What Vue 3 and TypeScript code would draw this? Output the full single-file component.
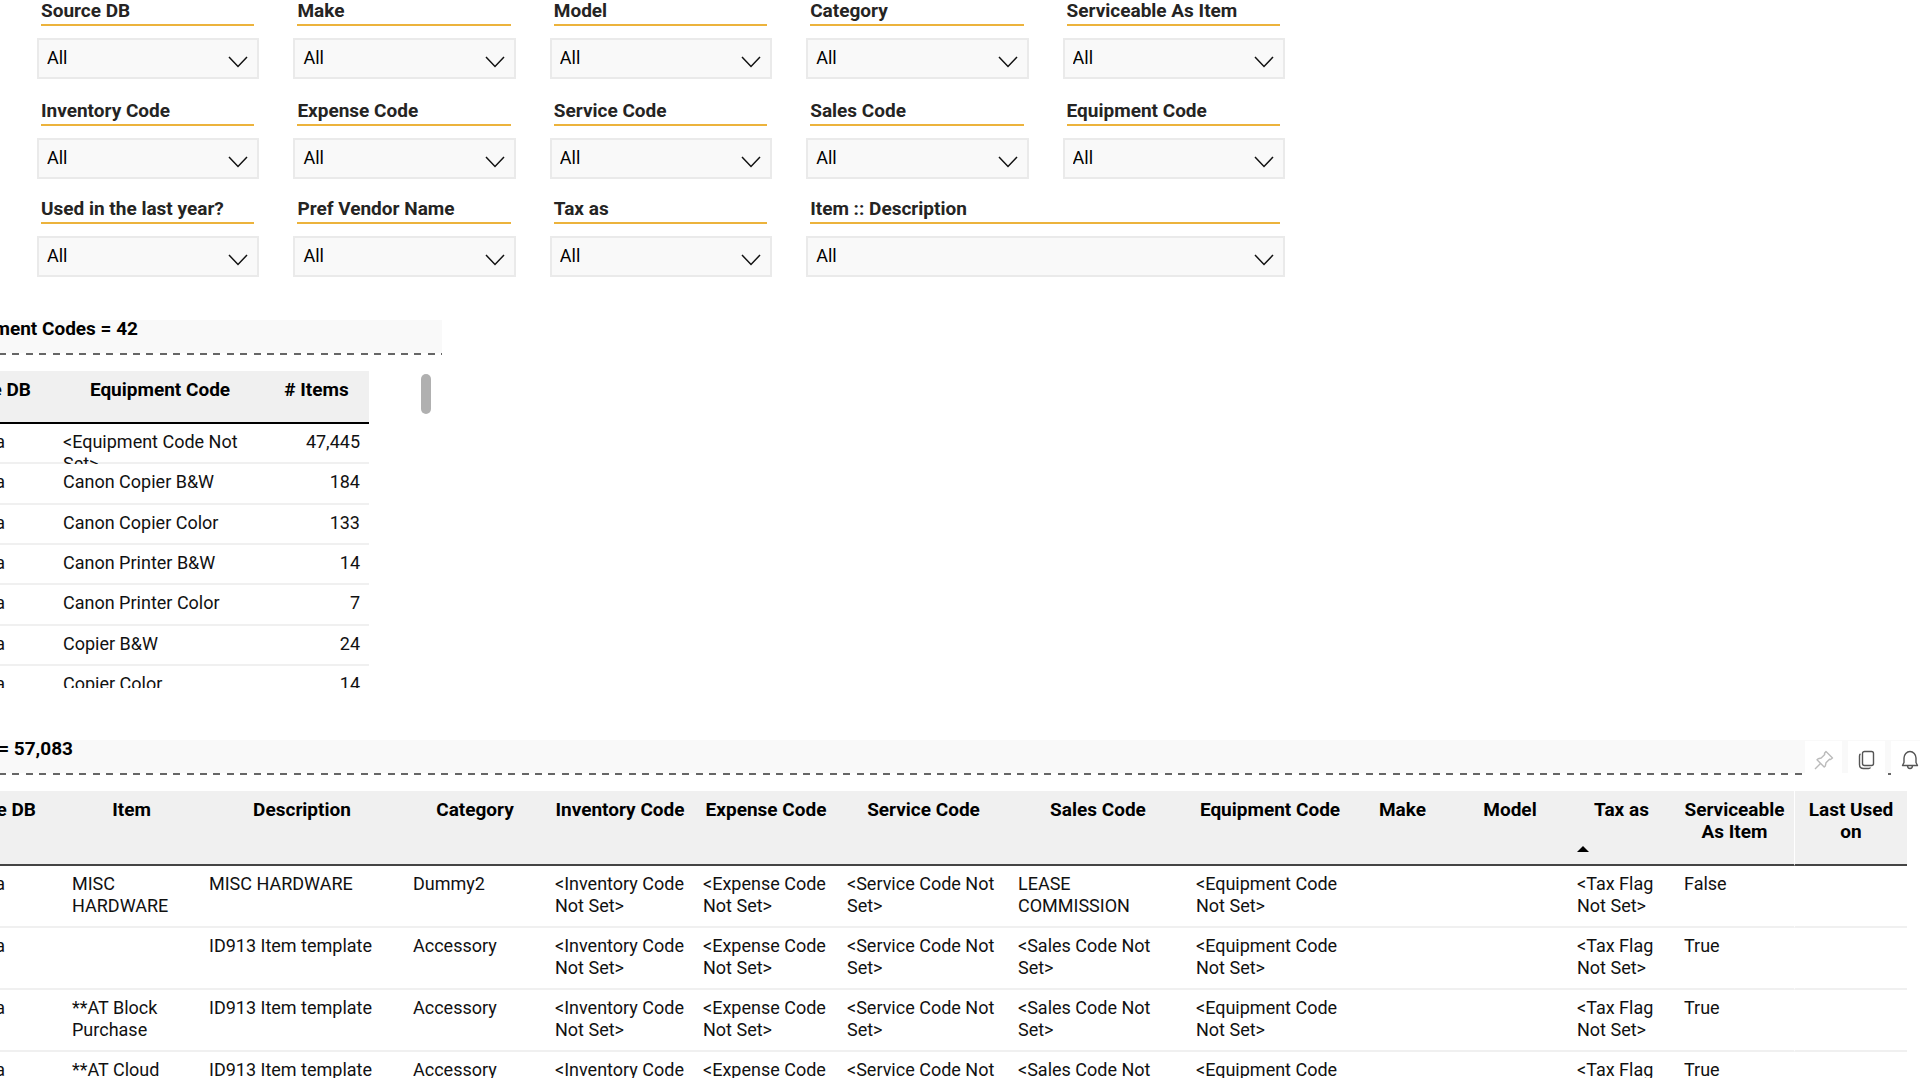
<script setup lang="ts">
interface Filter {
  id: string
  label: string
  wide?: boolean
}

interface Column {
  label: string
  width: number
  sorted?: boolean
}

const filters: Filter[] = [
  { id: 'source-db', label: 'Source DB' },
  { id: 'make', label: 'Make' },
  { id: 'model', label: 'Model' },
  { id: 'category', label: 'Category' },
  { id: 'serviceable', label: 'Serviceable As Item' },
  { id: 'inventory', label: 'Inventory Code' },
  { id: 'expense', label: 'Expense Code' },
  { id: 'service', label: 'Service Code' },
  { id: 'sales', label: 'Sales Code' },
  { id: 'equipment', label: 'Equipment Code' },
  { id: 'used', label: 'Used in the last year?' },
  { id: 'vendor', label: 'Pref Vendor Name' },
  { id: 'tax', label: 'Tax as' },
  { id: 'item', label: 'Item :: Description', wide: true },
]

const codes: [string, string][] = [
  ['<Equipment Code Not Set>', '47,445'],
  ['Canon Copier B&W', '184'],
  ['Canon Copier Color', '133'],
  ['Canon Printer B&W', '14'],
  ['Canon Printer Color', '7'],
  ['Copier B&W', '24'],
  ['Copier Color', '14'],
]

const dbColumnWidth = 63

const columns: Column[] = [
  { label: 'Item', width: 137 },
  { label: 'Description', width: 204 },
  { label: 'Category', width: 142 },
  { label: 'Inventory Code', width: 148 },
  { label: 'Expense Code', width: 144 },
  { label: 'Service Code', width: 171 },
  { label: 'Sales Code', width: 178 },
  { label: 'Equipment Code', width: 166 },
  { label: 'Make', width: 99 },
  { label: 'Model', width: 116 },
  { label: 'Tax as', width: 107, sorted: true },
  { label: 'Serviceable As Item', width: 119 },
  { label: 'Last Used on', width: 113 },
]

function itemRow(item: string, description: string, category: string, sales: string, serviceable: string): string[] {
  return [
    item,
    description,
    category,
    '<Inventory Code Not Set>',
    '<Expense Code Not Set>',
    '<Service Code Not Set>',
    sales,
    '<Equipment Code Not Set>',
    '',
    '',
    '<Tax Flag Not Set>',
    serviceable,
    '',
  ]
}

const items: string[][] = [
  itemRow('MISC HARDWARE', 'MISC HARDWARE', 'Dummy2', 'LEASE COMMISSION', 'False'),
  itemRow('', 'ID913 Item template', 'Accessory', '<Sales Code Not Set>', 'True'),
  itemRow('**AT Block Purchase', 'ID913 Item template', 'Accessory', '<Sales Code Not Set>', 'True'),
  itemRow('**AT Cloud', 'ID913 Item template', 'Accessory', '<Sales Code Not Set>', 'True'),
]
</script>

<template>
  <main class="report">
    <form class="filters">
      <div v-for="f in filters" :key="f.id" class="filter" :class="{ wide: f.wide }">
        <label :for="f.id">{{ f.label }}</label>
        <div class="picker">
          <select :id="f.id">
            <option>All</option>
          </select>
          <svg class="chevron" viewBox="0 0 20 12" aria-hidden="true">
            <path d="M1 1l9 9.500 9-9.500" />
          </svg>
        </div>
      </div>
    </form>

    <section class="codes">
      <h2 class="title"><span class="title-codes">ment Codes = 42</span></h2>
      <div class="codes-body">
        <table class="grid codes-grid">
          <colgroup>
            <col class="c-db" />
            <col class="c-code" />
            <col class="c-count" />
          </colgroup>
          <thead>
            <tr>
              <th class="db"><span>e DB</span></th>
              <th>Equipment Code</th>
              <th># Items</th>
            </tr>
          </thead>
          <tbody>
            <tr v-for="[code, count] in codes" :key="code">
              <td class="db"><span>a</span></td>
              <td><div class="clip">{{ code }}</div></td>
              <td class="num">{{ count }}</td>
            </tr>
          </tbody>
        </table>
        <div class="thumb"></div>
      </div>
    </section>

    <section class="items">
      <div class="items-head">
        <h2 class="title"><span class="title-items">= 57,083</span></h2>
        <div class="tools">
          <button type="button" class="pin" aria-label="Pin visual">
            <svg viewBox="0 0 20 20"><path d="M12 1.500L18.500 8L16.500 9.500L15.500 9.300L12 12.800L11.300 16L10.200 17L3 9.800L4.200 8.700L7.200 8L10.700 4.500L10.500 3.200ZM6.500 13.500L1 19" /></svg>
          </button>
          <button type="button" aria-label="Copy visual">
            <svg viewBox="0 0 20 20"><rect x="5.500" y="1.500" width="11" height="14" rx="2" /><path d="M3.500 4Q2.500 4.500 2.500 6V14.500Q2.500 18.500 6.500 18.500H11.500Q13 18.500 13.500 17.500" /></svg>
          </button>
          <button type="button" aria-label="Set alert">
            <svg viewBox="0 0 20 20"><path d="M2.500 15.500L4 12.500V8A6 6.500 0 0 1 16 8V12.500L17.500 15.500ZM7.500 15.500A2.500 3 0 0 0 12.500 15.500" /></svg>
          </button>
        </div>
      </div>
      <table class="grid items-grid">
        <colgroup>
          <col :style="{ width: dbColumnWidth + 'px' }" />
          <col v-for="c in columns" :key="c.label" :style="{ width: c.width + 'px' }" />
        </colgroup>
        <thead>
          <tr>
            <th class="db"><span>e DB</span></th>
            <th v-for="c in columns" :key="c.label">
              {{ c.label }}
              <svg v-if="c.sorted" class="sort" viewBox="0 0 12 6" aria-hidden="true"><path d="M0 6L6 0L12 6Z" /></svg>
            </th>
          </tr>
        </thead>
        <tbody>
          <tr v-for="(row, r) in items" :key="r">
            <td class="db"><span>a</span></td>
            <td v-for="(cell, c) in row" :key="c">{{ cell }}</td>
          </tr>
        </tbody>
      </table>
    </section>
  </main>
</template>

<style>
body {
  margin: 0;
  background: #fff;
}
</style>

<style scoped>
.report {
  height: 100vh;
  overflow: hidden;
  font-family: Roboto, "Liberation Sans", sans-serif;
  font-size: 18px;
  line-height: 22px;
  color: #111;
}

.filters {
  display: grid;
  grid-template-columns: repeat(5, 1fr);
  grid-template-rows: 100px 98px 122px;
  column-gap: 34px;
  width: 65%;
  margin-left: 37px;
}

.wide {
  grid-column: span 2;
}

.filter label {
  display: block;
  height: 24px;
  margin: 0 5px 12px 4px;
  border-bottom: 2px solid #ecb33c;
  font-size: 19px;
  font-weight: 700;
  color: #252423;
  white-space: nowrap;
}

.picker {
  position: relative;
}

select {
  appearance: none;
  display: block;
  width: 100%;
  height: 41px;
  padding: 0 8px 2px;
  border: 2px solid #eaeaea;
  border-radius: 0;
  background: #f9f9f9;
  font: inherit;
  color: #000;
}

.chevron {
  position: absolute;
  right: 11px;
  top: 18px;
  width: 20px;
  height: 12px;
  pointer-events: none;
  fill: none;
  stroke: #111;
  stroke-width: 1.500;
}

.title {
  height: 35px;
  margin: 0;
  font-size: 19px;
  font-weight: 700;
  line-height: 18px;
  background:
    repeating-linear-gradient(90deg, #666 0 6px, transparent 6px 12px, #666 12px 19px, transparent 19px 26px, #666 26px 33px, transparent 33px 39px, #666 39px 46px, transparent 46px 53px, #666 53px 60px, transparent 60px 66px, #666 66px 67px) 0 100% / 100% 2px no-repeat,
    linear-gradient(#f9f9f9, #f9f9f9) 0 0 / 100% 33px no-repeat;
  color: #000;
}

.title span {
  display: flex;
  justify-content: flex-end;
  white-space: nowrap;
}

.title-codes {
  width: 138px;
}

.title-items {
  width: 73px;
}

.grid {
  table-layout: fixed;
  border-collapse: separate;
  border-spacing: 0;
}

th,
td {
  box-sizing: border-box;
  padding: 7px 9px 0;
  vertical-align: top;
  text-align: left;
}

th {
  position: relative;
  padding: 8px 2px 0;
  background: #f0f0f0;
  border-bottom: 2px solid #000;
  font-size: 19px;
  font-weight: 700;
  text-align: center;
  color: #000;
}

td {
  border-bottom: 2px solid #f0f0f0;
}

.grid .db {
  padding-left: 0;
  padding-right: 0;
  white-space: nowrap;
}

.db span {
  display: flex;
  justify-content: flex-end;
  width: 5px;
}

th.db span {
  width: 31px;
}

.items-grid th.db span {
  width: 36px;
}

.codes {
  width: 442px;
}

.codes-body {
  display: flex;
  justify-content: space-between;
  height: 317px;
  margin-top: 16px;
  padding-right: 11px;
  overflow: hidden;
}

.codes-grid {
  width: 369px;
  height: max-content;
}

.c-db {
  width: 56px;
}

.c-code {
  width: 208px;
}

.c-count {
  width: 105px;
}

.codes-grid th {
  height: 53px;
}

.codes-grid td {
  height: 40px;
  padding-left: 7px;
}

.codes-grid tr:nth-child(3n + 2) td {
  height: 41px;
}

.clip {
  height: 33px;
  margin-bottom: -2px;
  overflow: hidden;
}

.codes-grid .num {
  text-align: right;
}

.thumb {
  width: 10px;
  height: 40px;
  margin-top: 3px;
  border-radius: 5px;
  background: #b0b0b0;
}

.items {
  margin-top: 52px;
}

.items-head {
  position: relative;
}

.tools {
  position: absolute;
  top: 1px;
  right: -8px;
  display: flex;
  gap: 6px;
}

.tools button {
  display: flex;
  align-items: center;
  justify-content: center;
  width: 37px;
  height: 37px;
  padding: 0;
  border: 0;
  background: #fff;
}

.tools svg {
  width: 20px;
  height: 20px;
  fill: none;
  stroke: #555;
  stroke-width: 1.400;
  stroke-linejoin: round;
}

.tools .pin svg {
  stroke: #bbb;
}

.items-grid {
  width: calc(100% - 13px);
  margin-top: 16px;
}

.items-grid th {
  height: 75px;
  border-bottom-color: #444;
}

.items-grid td {
  height: 62px;
}

.items-grid th:last-child,
.items-grid td:last-child {
  border-left: 1px solid #fff;
}

.sort {
  position: absolute;
  left: 9px;
  bottom: 12px;
  width: 12px;
  height: 6px;
  fill: #000;
}
</style>
